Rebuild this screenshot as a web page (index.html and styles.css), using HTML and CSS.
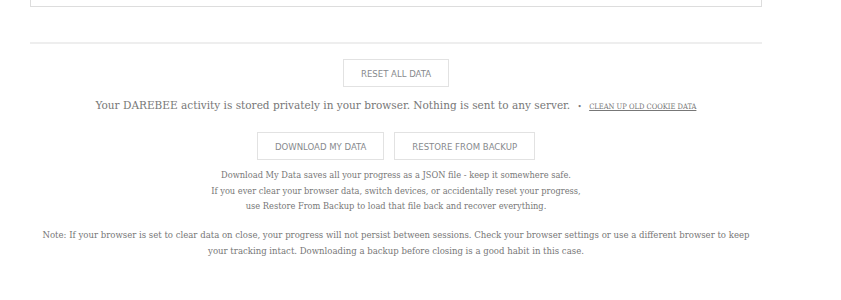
FILE: index.html
```html
<!DOCTYPE html>
<html lang="en">
<head>
    <meta charset="UTF-8">
    <meta name="viewport" content="width=device-width, initial-scale=1.0">
    <title>My Data</title>
    <link rel="stylesheet" href="styles.css">
</head>
<body>

    <div class="page">
        <div class="card"></div>

        <hr class="divider">

        <div class="data-tools">
            <button class="btn">Reset All Data</button>

            <p class="privacy">
                Your DAREBEE activity is stored privately in your browser. Nothing is sent to any server.
                <span class="dot">&bull;</span>
                <a href="#" class="cleanup">Clean up old cookie data</a>
            </p>

            <div class="btn-row">
                <button class="btn">Download My Data</button>
                <button class="btn">Restore From Backup</button>
            </div>

            <p class="help">
                Download My Data saves all your progress as a JSON file - keep it somewhere safe.<br>
                If you ever clear your browser data, switch devices, or accidentally reset your progress,<br>
                use Restore From Backup to load that file back and recover everything.
            </p>

            <p class="note">
                Note: If your browser is set to clear data on close, your progress will not persist between sessions. Check your browser settings or use a different browser to keep your tracking intact. Downloading a backup before closing is a good habit in this case.
            </p>
        </div>
    </div>

</body>
</html>
```

FILE: styles.css
```css
body {
    margin: 0;
    background: #fff;
    font-family: 'DejaVu Serif Condensed', 'DejaVu Serif', serif;
    font-stretch: condensed;
    color: #777;
}

.page {
    width: 732px;
    margin-left: 30px;
}

.card {
    height: 6px;
    border: 1px solid #ddd;
    border-top: none;
    background: #fff;
}

.divider {
    border: none;
    border-top: 2px solid #eee;
    margin: 35px 0 0;
}

.data-tools {
    display: flex;
    flex-direction: column;
    align-items: center;
    text-align: center;
    padding-top: 15px;
}

.btn {
    height: 28px;
    padding: 0 17px;
    background: #fff;
    border: 1px solid #e2e2e2;
    color: #878a8e;
    font-family: 'DejaVu Sans Condensed', 'Liberation Sans Narrow', sans-serif;
    font-stretch: condensed;
    font-size: 9.5px;
    text-transform: uppercase;
    cursor: pointer;
}

.privacy {
    margin: 10px 0 0;
    font-size: 11.7px;
    line-height: 16px;
}

.dot {
    font-size: 8px;
    margin: 0 4px;
}

.cleanup {
    color: #777;
    font-size: 7.5px;
    text-transform: uppercase;
}

.btn-row {
    display: flex;
    gap: 10px;
    margin-top: 17px;
}

.help {
    margin: 7px 0 0;
    font-size: 9.2px;
    line-height: 15.5px;
}

.note {
    margin: 13px 0 0;
    padding: 0 10px;
    font-size: 9.5px;
    line-height: 16px;
}
```
